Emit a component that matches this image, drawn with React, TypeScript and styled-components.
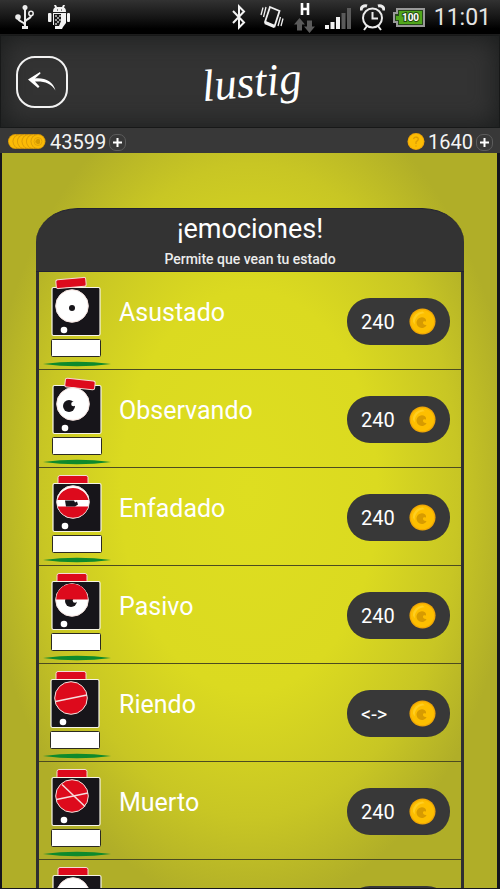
import React from "react";
import styled, { createGlobalStyle } from "styled-components";

const GlobalStyle = createGlobalStyle`
  *, *::before, *::after { box-sizing: border-box; }
  body { margin: 0; background: #12131a; font-family: Roboto, "Noto Sans", sans-serif; color: #fff; }
  button { font: inherit; color: inherit; padding: 0; border: 0; background: none; cursor: pointer; }
  h1, h2, p, ul { margin: 0; padding: 0; font-weight: 400; list-style: none; }
  svg { display: block; flex: none; }
`;

const Screen = styled.div`
  display: flex;
  flex-direction: column;
  height: 100vh;
`;

const StatusBar = styled.div`
  display: flex;
  align-items: center;
  justify-content: space-between;
  flex: none;
  height: 35px;
  padding: 0 9px 0 14px;
  background: linear-gradient(#323232, #161616 50%, #000 85%);
  border-bottom: 1px solid #1c1c1c;
`;

const StatusGroup = styled.div<{ $gap: number }>`
  display: flex;
  align-items: center;
  gap: ${(p) => p.$gap}px;
`;

const Clock = styled.time`
  margin-left: 1px;
  padding-top: 2px;
  font-size: 23px;
  line-height: 32px;
  color: #e4e4e4;
`;

const AppHeader = styled.header`
  display: grid;
  grid-template-columns: 52px 1fr 52px;
  align-items: center;
  flex: none;
  height: 93px;
  padding: 0 16px;
  background: #333;
  box-shadow: inset 0 0 26px 2px #1a1c1c, inset 0 0 0 1px #161717;
`;

const BackButton = styled.button`
  display: grid;
  place-items: center;
  width: 52px;
  height: 52px;
  border: 2px solid #f2f2f2;
  border-radius: 19px;
`;

const Logo = styled.h1`
  padding-left: 3px;
  font-family: "Liberation Serif", serif;
  font-style: italic;
  font-size: 45px;
  line-height: 60px;
  text-align: center;
  transform: rotate(-5deg);
`;

const Wallet = styled.div`
  display: flex;
  justify-content: space-between;
  flex: none;
  height: 25px;
  padding: 0 7px;
  background: #383838;
`;

const Balance = styled.div`
  display: flex;
  align-items: center;
  gap: 3px;
  height: 28px;
  font-size: 20px;
  line-height: 30px;
  color: #f4f4f4;
`;

const AddButton = styled.button`
  display: grid;
  place-items: center;
  width: 17px;
  height: 17px;
  border: 1px solid #5c5c5c;
  border-radius: 7px;
`;

const Stage = styled.main`
  display: flex;
  flex-direction: column;
  flex: 1;
  min-height: 0;
  padding: 55px 33px 0 34px;
  border: solid #15161d;
  border-width: 0 3px 1px 2px;
  background: radial-gradient(ellipse 54% 57% at 50% 46%, #dede20 0%, #dbda20 48%, #c8c624 78%, #b0ae28 100%);
`;

const Card = styled.section`
  display: flex;
  flex-direction: column;
  flex: 1;
  min-height: 0;
`;

const CardHeader = styled.header`
  flex: none;
  height: 64px;
  padding-top: 4px;
  border: solid #222233;
  border-width: 1px 0;
  border-radius: 42px 42px 0 0 / 34px 34px 0 0;
  background: #333;
  text-align: center;
`;

const CardTitle = styled.h2`
  font-size: 27px;
  line-height: 32px;
`;

const CardHint = styled.p`
  font-size: 14px;
  font-weight: 500;
  line-height: 28px;
  color: #ececec;
`;

const EmotionList = styled.ul`
  flex: 1;
  min-height: 0;
  overflow-y: auto;
  scrollbar-width: none;
  border: solid #2f2f30;
  border-width: 0 3px;
`;

const EmotionRow = styled.li`
  display: flex;
  align-items: flex-start;
  height: 98px;
  padding-right: 11px;
  border-bottom: 1px solid #4c4b20;
`;

const EmotionName = styled.span`
  flex: 1;
  padding: 25px 0 0 6px;
  font-size: 25px;
  line-height: 32px;
`;

const PriceButton = styled.button`
  display: flex;
  align-items: center;
  justify-content: space-between;
  width: 103px;
  height: 47px;
  margin-top: 26px;
  padding: 0 14px;
  border-radius: 23px;
  background: #383838;
  font-size: 20px;
  line-height: 24px;
`;

type Mood = "scared" | "watching" | "angry" | "passive" | "laughing" | "dead" | "plain";

const emotions: { name: string; mood: Mood; price: string }[] = [
  { name: "Asustado", mood: "scared", price: "240" },
  { name: "Observando", mood: "watching", price: "240" },
  { name: "Enfadado", mood: "angry", price: "240" },
  { name: "Pasivo", mood: "passive", price: "240" },
  { name: "Riendo", mood: "laughing", price: "<->" },
  { name: "Muerto", mood: "dead", price: "240" },
  { name: "", mood: "plain", price: "" },
];

const RED = "#dd0a1c";
const INK = "#17151a";

function Eye({ mood }: { mood: Mood }) {
  const lidded = mood === "laughing" || mood === "dead";
  return (
    <g>
      <circle cx="34" cy="34" r="16.3" fill={lidded ? RED : "#fff"} stroke="#f6e4e0" />
      {mood === "scared" && <circle cx="34" cy="36" r="3" fill={INK} />}
      {mood === "watching" && (
        <>
          <circle cx="30" cy="36" r="6" fill={INK} />
          <circle cx="34.5" cy="34" r="2.3" fill="#fff" />
        </>
      )}
      {mood === "angry" && (
        <>
          <path d="M18.500 32a16 16 0 0 1 31 0zM18.700 38.500a16 16 0 0 0 30.600 0z" fill={RED} />
          <path d="M26 32.500h9l1 2 2-1 1 3-3 2H27z" fill={INK} />
        </>
      )}
      {mood === "passive" && (
        <>
          <circle cx="33" cy="35" r="6" fill={INK} />
          <circle cx="37" cy="34.500" r="2.300" fill="#fff" />
          <path d="M18.200 33.500a15.800 15.800 0 0 1 31.600 0z" fill={RED} />
        </>
      )}
      {lidded && <path d="M18.500 37.500L50 31" stroke="#f6dede" strokeWidth="1.500" />}
      {mood === "dead" && <path d="M24 22.500L47 44.500" stroke="#f6dede" strokeWidth="1.500" />}
    </g>
  );
}

const capPlacement: Partial<Record<Mood, string>> = {
  scared: "translate(33 11) rotate(-5)",
  watching: "translate(41 14) rotate(6)",
};

const bodyShift: Record<Mood, number> = {
  scared: -1, watching: 0, angry: 0, passive: -1, laughing: -2, dead: -1, plain: 0,
};

function Character({ mood }: { mood: Mood }) {
  const tilted = capPlacement[mood];
  const cap = (
    <rect x="-15" y="-4.500" width="30" height="9" rx="2" transform={tilted ?? "translate(34 12)"} fill={RED} stroke="#f4dcd6" />
  );
  return (
    <svg width="74" height="97" viewBox="0 0 74 97" aria-hidden="true">
      <path d="M4 92q34-4.500 68 0q-34 4.500-68 0z" fill="#0e8a2c" />
      <g transform={`translate(${bodyShift[mood]} 0)`}>
        {!tilted && cap}
        <rect x="14" y="15.500" width="48" height="48" rx="1.500" fill={INK} stroke="#f6f4e6" strokeWidth="1.200" />
        {tilted && cap}
        <Eye mood={mood} />
        <circle cx="26" cy="58" r="3.300" fill="#fff" />
        <rect x="13.500" y="67.500" width="49" height="17" rx="1" fill="#fff" stroke="#2b2a20" />
      </g>
    </svg>
  );
}

function Coin({ size }: { size: number }) {
  return (
    <svg width={size} height={size} viewBox="0 0 28 28" aria-hidden="true">
      <circle cx="14" cy="14" r="13.500" fill="#f0a806" />
      <circle cx="14" cy="14" r="12" fill="#fdbf00" />
      <path d="M4 14A10.500 10.500 0 0 1 14 3.500l2.500 2A10 10 0 0 0 6 17z" fill="#ffce22" />
      <path d="M16.500 10.700a5.500 5.500 0 1 0 1.800 6.800c-2 .5-4-.5-3.800-2.500.2-1.500 2-1.500 3-.8.500-1.500 0-2.500-1-3.500z" fill="#d79b00" />
    </svg>
  );
}

function CoinStack() {
  return (
    <svg width="40" height="16" viewBox="0 0 40 16" aria-hidden="true">
      {[8.5, 13, 17.5, 22, 26.5, 31].map((x) => (
        <g key={x}>
          <circle cx={x} cy="7.500" r="7.500" fill="#d99a08" />
          <circle cx={x} cy="7.500" r="6.600" fill="#fbbb06" />
        </g>
      ))}
      <circle cx="31" cy="7.500" r="4" fill="none" stroke="#e3a406" />
      <path d="M33 6a2.500 2.500 0 1 0 0 3" fill="#d59a00" />
    </svg>
  );
}

function BonusCoin() {
  return (
    <svg width="18" height="18" viewBox="0 0 18 18" aria-hidden="true">
      <circle cx="9" cy="8.500" r="8.500" fill="#efa507" />
      <circle cx="9" cy="8.500" r="7.500" fill="#fcbd03" />
      <path d="M6.500 6c1-3 6-2 4.500 1L9 9v2M9 12.500v1" fill="none" stroke="#dc9c05" strokeWidth="1.300" />
    </svg>
  );
}

function UsbIcon() {
  return (
    <svg width="22" height="26" viewBox="0 0 22 26" aria-hidden="true" fill="none" stroke="#ececec" strokeWidth="2">
      <path d="M11 5v18M11 21C10 17 4 18 4 14M11 18c1-4 6-2 6-7" />
      <circle cx="11" cy="3.500" r="2.500" fill="#ececec" stroke="none" />
      <circle cx="4" cy="13" r="2.800" fill="#ececec" stroke="none" />
      <circle cx="17" cy="9.500" r="2.200" strokeWidth="1.500" />
      <path d="M8 23.500h6" strokeWidth="3" />
    </svg>
  );
}

function DroidIcon() {
  return (
    <svg width="22" height="26" viewBox="0 0 22 26" aria-hidden="true">
      <g fill="#f2f2f2">
        <path d="M5 8c0-3 1-4 2-4.500L6 1h2l1 2h5l1-2h2l-1 2.500c1 .5 2 1.500 2 4.500z" />
        <path d="M5 9h13v10l-3 4-1 2H7v-4H5z" />
        <rect x="0" y="9" width="3.500" height="9" rx="1" />
        <rect x="19" y="9" width="3" height="9" rx="1" />
      </g>
      <path d="M6 10h7v7l-2 5H6z" fill="#191919" />
      <path d="M7 11h2v2H7zM11 11h2v2h-2zM9 13h2v2H9zM7 15h2v2H7zM11 15h2v2h-2zM9 17h2v2H9zM7 19h2v2H7z" fill="#999" />
      <path d="M9 6h1M13 6h1" stroke="#222" />
    </svg>
  );
}

function BluetoothIcon() {
  return (
    <svg width="14" height="26" viewBox="0 0 14 26" aria-hidden="true" fill="none" stroke="#f4f4f4" strokeWidth="2">
      <path d="M1 7l11 11.500-5 5V2.500l5 5L1 19" />
    </svg>
  );
}

function VibrateIcon() {
  return (
    <svg width="24" height="24" viewBox="0 0 24 24" aria-hidden="true" fill="none" stroke="#f0f0f0">
      <path d="M10 2l9.500 4-5 15.500-9.500-4.500z" strokeWidth="1.800" />
      <path d="M5 17.500l9.500 4" strokeWidth="3.500" />
      <path d="M3 2.500L1 10M6 2L3.500 12M20.500 12l-2.500 9M23 13.500l-2 7.500" strokeWidth="1.300" />
    </svg>
  );
}

function DataIcon() {
  return (
    <svg width="21" height="32" viewBox="0 0 21 32" aria-hidden="true">
      <path d="M8 2v12M14 2v12M8 8h6" stroke="#fff" strokeWidth="2.600" />
      <path d="M5.500 17l5.500 6.500H8v6H3v-6H0zM15.500 32l5.500-6.500h-3v-6h-5v6h-3z" fill="#5b5b5b" />
    </svg>
  );
}

function SignalIcon() {
  return (
    <svg width="27" height="26" viewBox="0 0 27 26" aria-hidden="true">
      <path d="M0 21h4v4H0zM5.500 18h4v7h-4zM11 13h4v12h-4z" fill="#f2f2f2" />
      <path d="M16.500 9h4v16h-4zM22 4h4v21h-4z" fill="#5a5a5a" />
    </svg>
  );
}

function AlarmIcon() {
  return (
    <svg width="25" height="27" viewBox="0 0 25 27" aria-hidden="true" fill="none" stroke="#ececec" strokeWidth="2">
      <circle cx="12.500" cy="14" r="9.500" />
      <path d="M12.500 8v6.500H18M7 22l-3 4M18 22l3 4" />
      <path d="M1 6.500C1 3 4 1 7 2M24 6.500C24 3 21 1 18 2" strokeWidth="3" />
    </svg>
  );
}

function BatteryIcon() {
  return (
    <svg width="32" height="19" viewBox="0 0 32 19" aria-hidden="true">
      <path d="M4 1h27v17H4v-4H1V5h3z" fill="#26471a" stroke="#999" strokeWidth="2" />
      <path d="M6 3h23v13H6v-4H3V8h3z" fill="#50a61c" />
      <text x="17.500" y="13" textAnchor="middle" fontFamily="Roboto, sans-serif" fontSize="10" fontWeight="700" fill="#fff" stroke="#234812" strokeWidth="2" paintOrder="stroke">100</text>
    </svg>
  );
}

function PlusIcon() {
  return (
    <svg width="9" height="9" viewBox="0 0 9 9" aria-hidden="true">
      <path d="M4.500 0v9M0 4.500h9" stroke="#fff" strokeWidth="2" />
    </svg>
  );
}

function BackIcon() {
  return (
    <svg width="30" height="24" viewBox="0 0 30 24" aria-hidden="true">
      <path d="M1 9.500L13 2l.5 1.500L8 8.500c10-1 18 3 20.500 12C24 13 17 11 8 11.500l4.500 5-1.500 1.500z" fill="#fff" />
    </svg>
  );
}

export default function App() {
  return (
    <>
      <GlobalStyle />
      <Screen>
        <StatusBar>
          <StatusGroup $gap={12}>
            <UsbIcon />
            <DroidIcon />
          </StatusGroup>
          <StatusGroup $gap={14}>
            <BluetoothIcon />
            <StatusGroup $gap={10}>
              <VibrateIcon />
              <DataIcon />
              <StatusGroup $gap={8}>
                <SignalIcon />
                <AlarmIcon />
                <BatteryIcon />
                <Clock>11:01</Clock>
              </StatusGroup>
            </StatusGroup>
          </StatusGroup>
        </StatusBar>

        <AppHeader>
          <BackButton type="button" aria-label="Volver">
            <BackIcon />
          </BackButton>
          <Logo>lustig</Logo>
        </AppHeader>

        <Wallet>
          <Balance>
            <CoinStack />
            <span>43599</span>
            <AddButton type="button" aria-label="Añadir monedas">
              <PlusIcon />
            </AddButton>
          </Balance>
          <Balance>
            <BonusCoin />
            <span>1640</span>
            <AddButton type="button" aria-label="Añadir fichas">
              <PlusIcon />
            </AddButton>
          </Balance>
        </Wallet>

        <Stage>
          <Card>
            <CardHeader>
              <CardTitle>¡emociones!</CardTitle>
              <CardHint>Permite que vean tu estado</CardHint>
            </CardHeader>
            <EmotionList>
              {emotions.map((e) => (
                <EmotionRow key={e.mood}>
                  <Character mood={e.mood} />
                  <EmotionName>{e.name}</EmotionName>
                  <PriceButton type="button" aria-label={`Comprar ${e.name}`}>
                    <span>{e.price}</span>
                    <Coin size={27} />
                  </PriceButton>
                </EmotionRow>
              ))}
            </EmotionList>
          </Card>
        </Stage>
      </Screen>
    </>
  );
}
